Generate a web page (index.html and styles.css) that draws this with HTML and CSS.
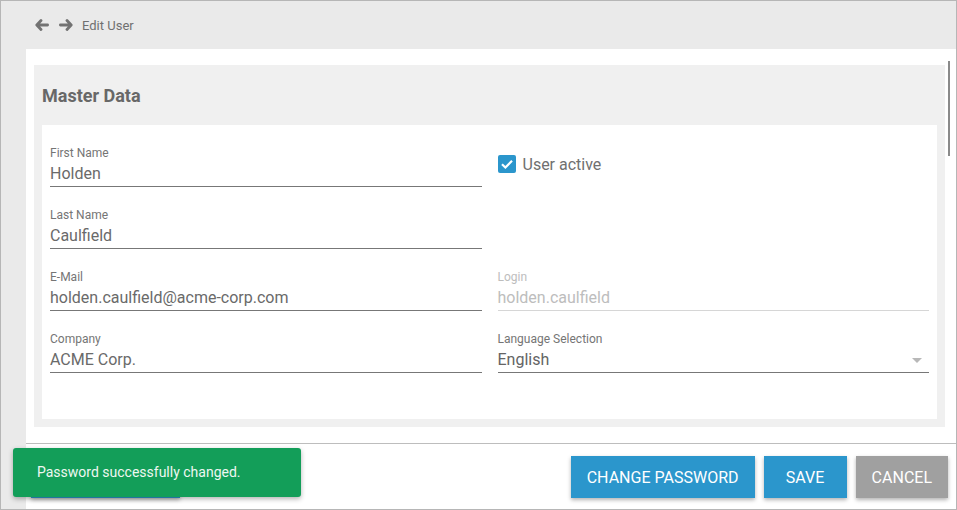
FILE: index.html
```html
<!DOCTYPE html>
<html lang="en">
<head>
<meta charset="utf-8">
<title>Edit User</title>
<link rel="stylesheet" href="styles.css">
</head>
<body>
<div class="app">
  <header class="topbar">
    <svg class="nav-arrow" width="14" height="12" viewBox="0 0 14 12"><path d="M6 1.5 L1.8 6 L6 10.5 M2 6 H12.6" fill="none" stroke="#727272" stroke-width="2.8" stroke-linecap="round" stroke-linejoin="round"/></svg>
    <svg class="nav-arrow" width="14" height="12" viewBox="0 0 14 12"><path d="M8 1.5 L12.2 6 L8 10.5 M12 6 H1.4" fill="none" stroke="#727272" stroke-width="2.8" stroke-linecap="round" stroke-linejoin="round"/></svg>
    <span class="crumb">Edit User</span>
  </header>
  <main class="main">
    <div class="panel">
      <div class="scroll">
        <div class="content">
          <section class="section">
            <h2 class="section-title">Master Data</h2>
            <div class="card">
              <div class="field">
                <label class="label">First Name</label>
                <div class="value">Holden</div>
              </div>
              <div class="check-cell">
                <span class="checkbox"><svg width="18" height="18" viewBox="0 0 18 18"><path d="M4 9.2 L7.4 12.5 L14 5.8" fill="none" stroke="#fff" stroke-width="2.2"/></svg></span>
                <span class="check-label">User active</span>
              </div>
              <div class="field">
                <label class="label">Last Name</label>
                <div class="value">Caulfield</div>
              </div>
              <div></div>
              <div class="field">
                <label class="label">E-Mail</label>
                <div class="value">holden.caulfield@acme-corp.com</div>
              </div>
              <div class="field disabled">
                <label class="label">Login</label>
                <div class="value">holden.caulfield</div>
              </div>
              <div class="field">
                <label class="label">Company</label>
                <div class="value">ACME Corp.</div>
              </div>
              <div class="field">
                <label class="label">Language Selection</label>
                <div class="value select"><span>English</span><span class="caret"></span></div>
              </div>
            </div>
          </section>
        </div>
        <div class="scrollbar"><div class="thumb"></div></div>
      </div>
      <footer class="footer">
        <button class="btn btn-left" aria-label="Back"></button>
        <div class="actions">
          <button class="btn btn-pw">CHANGE PASSWORD</button>
          <button class="btn btn-save">SAVE</button>
          <button class="btn btn-cancel">CANCEL</button>
        </div>
      </footer>
    </div>
  </main>
  <div class="toast">Password successfully changed.</div>
</div>
</body>
</html>
```

FILE: styles.css
```css
* { box-sizing: border-box; }
html, body { margin: 0; padding: 0; }
body {
  font-family: Roboto, "Liberation Sans", Arial, sans-serif;
  background: #fff;
}
.app {
  position: relative;
  width: 957px;
  height: 510px;
  border: 1px solid #b6b6b6;
  background: #eaeaea;
  display: flex;
  flex-direction: column;
  overflow: hidden;
}
.topbar {
  height: 48px;
  flex: none;
  display: flex;
  align-items: center;
  padding-left: 34px;
}
.nav-arrow { display: block; margin-right: 10px; }
.nav-arrow + .nav-arrow { margin-right: 9px; }
.crumb {
  font-size: 13px;
  color: #707070;
}
.main {
  flex: 1;
  display: flex;
  padding-left: 25px;
  min-height: 0;
}
.panel {
  flex: 1;
  background: #fff;
  display: flex;
  flex-direction: column;
}
.scroll {
  flex: 1;
  display: flex;
  min-height: 0;
}
.content {
  flex: 1;
  padding: 16px 0 16px 8px;
}
.scrollbar {
  width: 11px;
  flex: none;
  padding-left: 3px;
  padding-top: 12px;
}
.thumb {
  width: 2px;
  height: 95px;
  background: #8a8a8a;
}
.section {
  background: #f0f0f0;
  padding: 19px 8px 8px 8px;
}
.section-title {
  margin: 0 0 17px 0;
  font-size: 18px;
  line-height: 24px;
  font-weight: 700;
  color: #686868;
}
.card {
  background: #fff;
  padding: 0 8px 46px 8px;
  display: grid;
  grid-template-columns: 1fr 1fr;
  column-gap: 16px;
}
.field {
  height: 62px;
  padding-top: 21px;
  border-bottom: 1px solid #777;
}
.label {
  display: block;
  font-size: 12px;
  line-height: 14px;
  color: #757575;
}
.value {
  margin-top: 4px;
  font-size: 16px;
  line-height: 20px;
  color: #6a6a6a;
}
.disabled { border-bottom-color: #d6d6d6; }
.disabled .label { color: #bdbdbd; }
.disabled .value { color: #bdbdbd; }
.select {
  display: flex;
  justify-content: space-between;
  align-items: center;
  color: #646464;
}
.caret {
  width: 0;
  height: 0;
  border-left: 5px solid transparent;
  border-right: 5px solid transparent;
  border-top: 5px solid #b8b8b8;
  margin-right: 7px;
  margin-top: 1px;
}
.check-cell {
  padding-top: 30px;
  display: flex;
  align-items: center;
  height: 48px;
}
.checkbox {
  width: 18px;
  height: 18px;
  border-radius: 2px;
  background: #2b96cc;
  display: block;
}
.checkbox svg { display: block; }
.check-label {
  margin-left: 7px;
  font-size: 16px;
  line-height: 18px;
  color: #707070;
  padding-top: 1px;
}
.footer {
  height: 66px;
  flex: none;
  border-top: 1px solid #bdbdbd;
  display: flex;
  justify-content: space-between;
  align-items: flex-start;
  padding: 12px 8px 0 5px;
}
.actions {
  display: flex;
  gap: 9px;
}
.btn {
  height: 42px;
  border: none;
  border-radius: 0;
  padding: 0 16px;
  background: #2b96cc;
  color: #fff;
  font-family: Roboto, "Liberation Sans", Arial, sans-serif;
  font-size: 16px;
  box-shadow: 0 2px 4px rgba(0,0,0,0.3);
}
.btn-left { width: 149px; }
.btn-pw { min-width: 184px; }
.btn-save { min-width: 83px; }
.btn-cancel { background: #a0a0a0; min-width: 92px; }
.toast {
  position: absolute;
  left: 12px;
  top: 447px;
  width: 288px;
  height: 49px;
  background: #139e59;
  border-radius: 3px;
  box-shadow: 0 2px 5px rgba(0,0,0,0.3);
  color: #eef7f1;
  font-size: 14px;
  line-height: 49px;
  padding-left: 24px;
}
```
